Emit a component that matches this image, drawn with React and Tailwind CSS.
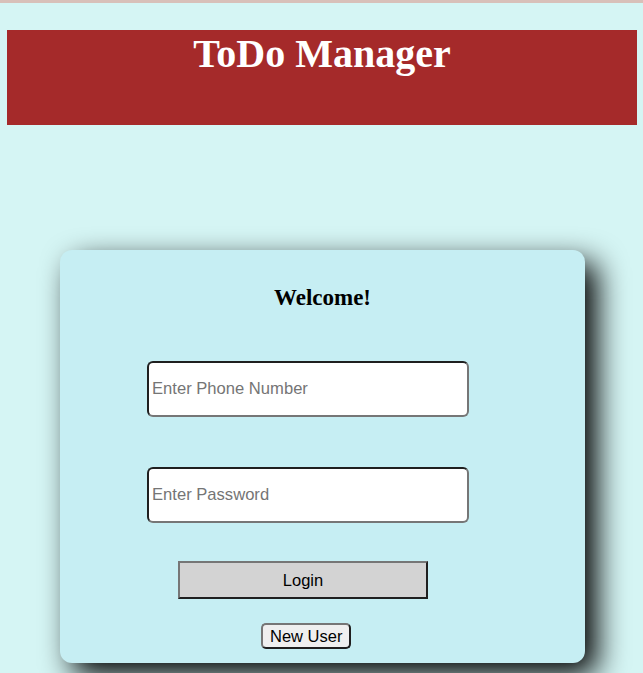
export default function App() {
  return (
    <div className="min-h-[673px] bg-[#d5f5f4] border-t-[3px] border-[#d8c0b9] overflow-hidden">
      <header className="mt-[27px] ml-[7px] w-[630px] h-[95px] bg-[#a52a2a]">
        <h1 className="text-center text-white font-bold text-[40px] leading-[46px] pt-[1px] font-['Liberation_Serif',serif]">
          ToDo Manager
        </h1>
      </header>

      <div className="mt-[125px] ml-[60px] w-[525px] h-[413px] rounded-xl bg-[#c6eef3] shadow-[12px_12px_30px_#000] flex flex-col">
        <h2 className="mt-[34px] self-center text-[23px] leading-[28px] font-bold text-black font-['Liberation_Serif',serif]">
          Welcome!
        </h2>

        <input
          type="text"
          placeholder="Enter Phone Number"
          className="mt-[49px] ml-[87px] w-[322px] h-[56px] bg-white rounded-md border-2 border-t-[#1f1f1f] border-l-[#1f1f1f] border-b-[#767676] border-r-[#767676] px-[3px] text-[16.6px] text-black placeholder:text-[#757575] font-['Liberation_Sans',Arial,sans-serif] outline-none"
        />

        <input
          type="password"
          placeholder="Enter Password"
          className="mt-[50px] ml-[87px] w-[322px] h-[56px] bg-white rounded-md border-2 border-t-[#1f1f1f] border-l-[#1f1f1f] border-b-[#767676] border-r-[#767676] px-[3px] text-[16.6px] text-black placeholder:text-[#757575] font-['Liberation_Sans',Arial,sans-serif] outline-none"
        />

        <button className="mt-[38px] ml-[118px] w-[250px] h-[38px] bg-[#d3d3d3] border-2 border-t-[#767676] border-l-[#767676] border-b-[#1f1f1f] border-r-[#1f1f1f] text-[16.5px] text-black font-['Liberation_Sans',Arial,sans-serif]">
          Login
        </button>

        <button className="mt-[24px] ml-[201px] self-start h-[26px] px-[7px] bg-[#efefef] rounded-[5px] border-2 border-t-[#767676] border-l-[#767676] border-b-[#1f1f1f] border-r-[#1f1f1f] text-[16.5px] leading-[19px] text-black font-['Liberation_Sans',Arial,sans-serif]">
          New User
        </button>
      </div>
    </div>
  )
}
